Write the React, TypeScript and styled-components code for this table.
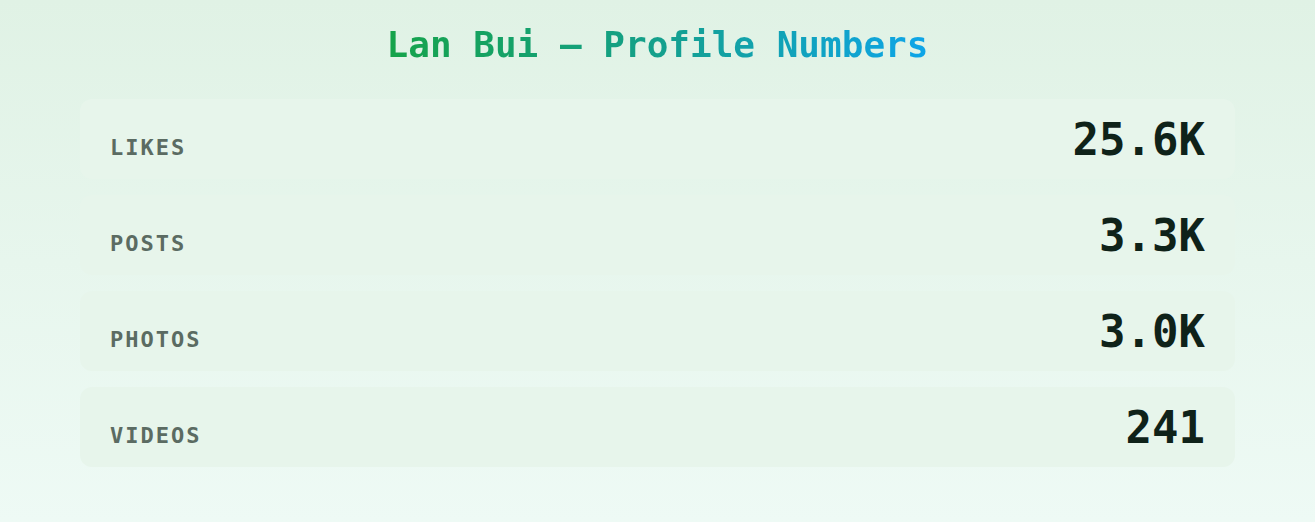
import styled, { createGlobalStyle } from "styled-components";

const GlobalStyle = createGlobalStyle`
    html, body {
        margin: 0;
        padding: 0;
    }
    body {
        font-family: "DejaVu Sans Mono", "Liberation Mono", monospace;
        background: linear-gradient(180deg, #e0f2e5 0%, #eefaf5 100%);
        min-height: 100vh;
    }
`

const Page = styled.main`
    min-height: 100vh;
    box-sizing: border-box;
    padding: 24px 80px;
`

// gradient only over the text itself, so the box hugs the words
const Title = styled.h1`
    width: fit-content;
    margin: 0 auto 34px;
    font-size: 36px;
    font-weight: 700;
    line-height: normal;
    background: linear-gradient(90deg, #16a34a 0%, #14a08c 50%, #0ea5e9 100%);
    -webkit-background-clip: text;
    background-clip: text;
    color: transparent;
`

const StatList = styled.ul`
    list-style: none;
    margin: 0;
    padding: 0;
    display: flex;
    flex-direction: column;
    gap: 16px;
`

const StatRow = styled.li`
    display: flex;
    justify-content: space-between;
    align-items: baseline;
    box-sizing: border-box;
    height: 80px;
    padding: 19px 30px 17px;
    border-radius: 12px;
    background: #e7f5eb;
`

const Label = styled.span`
    font-size: 22px;
    font-weight: 700;
    letter-spacing: 2px;
    text-transform: uppercase;
    color: #5b6b62;
`

const Value = styled.span`
    font-size: 44px;
    font-weight: 700;
    line-height: 1;
    color: #0f2219;
`

interface Stat {
    label: string,
    value: string,
}

const stats: Stat[] = [
    { label: "Likes", value: "25.6K" },
    { label: "Posts", value: "3.3K" },
    { label: "Photos", value: "3.0K" },
    { label: "Videos", value: "241" },
]

function App() {
    return (
        <>
            <GlobalStyle />
            <Page>
                <Title>Lan Bui — Profile Numbers</Title>
                <StatList>
                    {stats.map((stat) => (
                        <StatRow key={stat.label}>
                            <Label>{stat.label}</Label>
                            <Value>{stat.value}</Value>
                        </StatRow>
                    ))}
                </StatList>
            </Page>
        </>
    )
}

export default App;
